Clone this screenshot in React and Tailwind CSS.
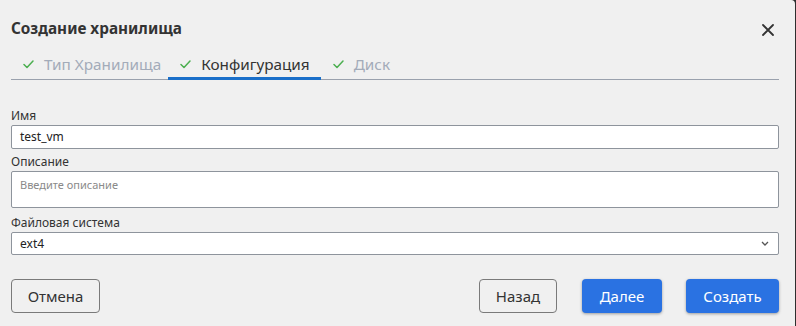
import React from "react";

function Check() {
  return (
    <svg width="11" height="9" viewBox="0 0 11 9" fill="none" className="shrink-0">
      <path d="M1 4.5 L4 7.5 L10 1" stroke="#4caf50" strokeWidth="1.5" strokeLinecap="round" strokeLinejoin="round" />
    </svg>
  );
}

function Tab({ label, active, pr }) {
  return (
    <div className={"flex items-center gap-[10px] pl-[12px] h-[28px] border-b-[3px] " + pr + " " + (active ? "border-[#1a6fc9] text-[#333]" : "border-transparent text-[#a3abb9]")}>
      <Check />
      <span className="text-[15.3px] leading-none">{label}</span>
    </div>
  );
}

export default function App() {
  return (
    <div className="w-[796px] h-[326px] bg-[#2e2e2e] flex" style={{ fontFamily: '"Noto Sans", "Open Sans", sans-serif' }}>
      <div className="w-[795px] h-[326px] bg-[#f0f0f0] rounded-tr-[4px] flex flex-col px-[11px]">
        <div className="flex items-center justify-between pt-[16px] h-[42px]">
          <div className="text-[15.3px] font-bold text-[#333] leading-none">Создание хранилища</div>
          <svg width="14" height="14" viewBox="0 0 14 14" className="mr-[9px] mt-[2px]">
            <path d="M2 2 L12 12 M12 2 L2 12" stroke="#333" strokeWidth="1.8" strokeLinecap="round" />
          </svg>
        </div>
        <div className="flex w-[768px] border-b border-[#9aa1ad] mt-[10px]">
          <div className="flex -mb-px">
            <Tab label="Тип Хранилища" pr="pr-[7px]" />
            <Tab label="Конфигурация" active pr="pr-[11px]" />
            <Tab label="Диск" pr="pr-[9px]" />
          </div>
        </div>
        <div className="flex flex-col w-[768px] mt-[28px] text-[12px] text-[#333]">
          <label className="leading-[16px] mb-px">Имя</label>
          <div className="h-[24px] bg-white border border-[#8e949c] rounded-[2px] flex items-center px-[8px] text-[12px] text-[#222]">test_vm</div>
          <label className="leading-[16px] mt-[5px] mb-px">Описание</label>
          <div className="h-[37px] bg-white border border-[#8e949c] rounded-[2px] px-[8px] pt-[5px] text-[11px] text-[#8a8a8a]">Введите описание</div>
          <label className="leading-[16px] mt-[7px] mb-px">Файловая система</label>
          <div className="h-[23px] bg-white border border-[#8e949c] rounded-[2px] flex items-center justify-between px-[8px] text-[12px] text-[#222]">
            <span>ext4</span>
            <svg width="8" height="5" viewBox="0 0 8 5" className="mr-[1px]">
              <path d="M1 1 L4 4 L7 1" stroke="#555" strokeWidth="1.3" fill="none" />
            </svg>
          </div>
        </div>
        <div className="flex w-[768px] items-center mt-[24px]">
          <button className="h-[34px] w-[89px] border border-[#7a7a7a] rounded-[4px] text-[15px] text-[#333]">Отмена</button>
          <div className="flex-1" />
          <button className="h-[34px] w-[78px] border border-[#7a7a7a] rounded-[4px] text-[15px] text-[#333]">Назад</button>
          <button className="h-[34px] w-[80px] ml-[25px] rounded-[4px] bg-[#2a72e2] text-white text-[15px] shadow-[0_1px_3px_rgba(0,0,0,0.35)]">Далее</button>
          <button className="h-[34px] w-[93px] ml-[24px] rounded-[4px] bg-[#2a72e2] text-white text-[15px] shadow-[0_1px_3px_rgba(0,0,0,0.35)]">Создать</button>
        </div>
      </div>
    </div>
  );
}
